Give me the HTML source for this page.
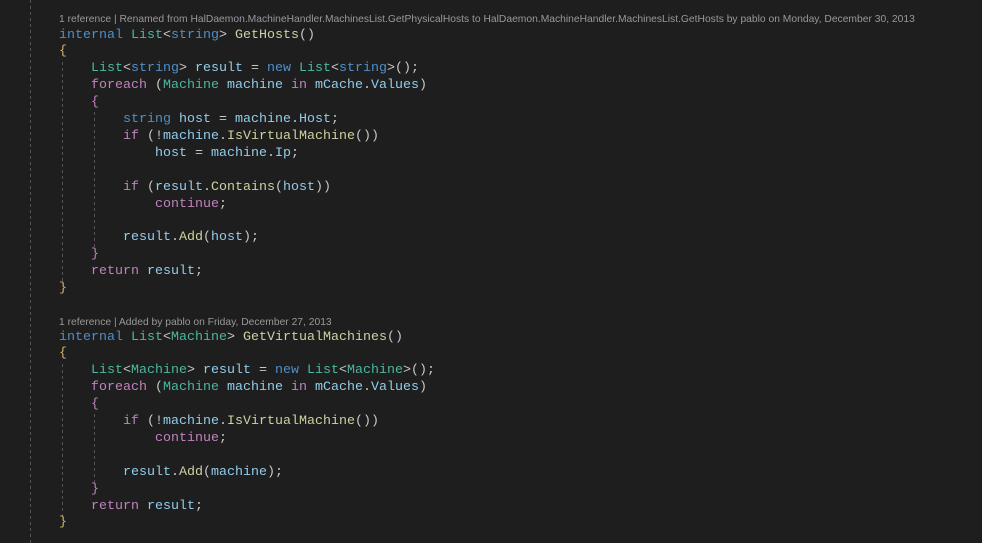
<!DOCTYPE html><html><head><style>
body{margin:0;width:982px;height:543px;background:#1e1e1e;overflow:hidden;position:relative}
.b{position:absolute;left:59px;margin:0;font-family:"Liberation Mono",monospace;font-size:13.33px;line-height:16.9px;color:#c8c8c8;white-space:pre}
.cl{position:absolute;left:59px;font-family:"Liberation Sans",sans-serif;font-size:10.3px;color:#999;white-space:pre}
.k{color:#4f8fc8}.t{color:#4ab8a0}.m{color:#d0d0a0}.v{color:#92cdeb}.c{color:#c083be}.br{color:#d2b26c}
.g{position:absolute;width:1px;background:repeating-linear-gradient(#555 0 3px,transparent 3px 6px)}
</style></head><body>
<div class="g" style="left:30px;top:0;height:543px"></div>
<div class="g" style="left:62px;top:62px;height:222px"></div>
<div class="g" style="left:94px;top:112px;height:137px"></div>
<div class="g" style="left:62px;top:364px;height:154px"></div>
<div class="g" style="left:94px;top:414px;height:70px"></div>
<div class="cl" style="top:14px">1 reference | Renamed from HalDaemon.MachineHandler.MachinesList.GetPhysicalHosts to HalDaemon.MachineHandler.MachinesList.GetHosts by pablo on Monday, December 30, 2013</div>
<pre class="b" style="top:27.5px"><span class="k">internal</span> <span class="t">List</span>&lt;<span class="k">string</span>&gt; <span class="m">GetHosts</span>()
<span class="br">{</span>
    <span class="t">List</span>&lt;<span class="k">string</span>&gt; <span class="v">result</span> = <span class="k">new</span> <span class="t">List</span>&lt;<span class="k">string</span>&gt;();
    <span class="c">foreach</span> (<span class="t">Machine</span> <span class="v">machine</span> <span class="c">in</span> <span class="v">mCache</span>.<span class="v">Values</span>)
    <span class="c">{</span>
        <span class="k">string</span> <span class="v">host</span> = <span class="v">machine</span>.<span class="v">Host</span>;
        <span class="c">if</span> (!<span class="v">machine</span>.<span class="m">IsVirtualMachine</span>())
            <span class="v">host</span> = <span class="v">machine</span>.<span class="v">Ip</span>;

        <span class="c">if</span> (<span class="v">result</span>.<span class="m">Contains</span>(<span class="v">host</span>))
            <span class="c">continue</span>;

        <span class="v">result</span>.<span class="m">Add</span>(<span class="v">host</span>);
    <span class="c">}</span>
    <span class="c">return</span> <span class="v">result</span>;
<span class="br">}</span></pre>
<div class="cl" style="top:317px">1 reference | Added by pablo on Friday, December 27, 2013</div>
<pre class="b" style="top:329.5px"><span class="k">internal</span> <span class="t">List</span>&lt;<span class="t">Machine</span>&gt; <span class="m">GetVirtualMachines</span>()
<span class="br">{</span>
    <span class="t">List</span>&lt;<span class="t">Machine</span>&gt; <span class="v">result</span> = <span class="k">new</span> <span class="t">List</span>&lt;<span class="t">Machine</span>&gt;();
    <span class="c">foreach</span> (<span class="t">Machine</span> <span class="v">machine</span> <span class="c">in</span> <span class="v">mCache</span>.<span class="v">Values</span>)
    <span class="c">{</span>
        <span class="c">if</span> (!<span class="v">machine</span>.<span class="m">IsVirtualMachine</span>())
            <span class="c">continue</span>;

        <span class="v">result</span>.<span class="m">Add</span>(<span class="v">machine</span>);
    <span class="c">}</span>
    <span class="c">return</span> <span class="v">result</span>;
<span class="br">}</span></pre>
</body></html>
